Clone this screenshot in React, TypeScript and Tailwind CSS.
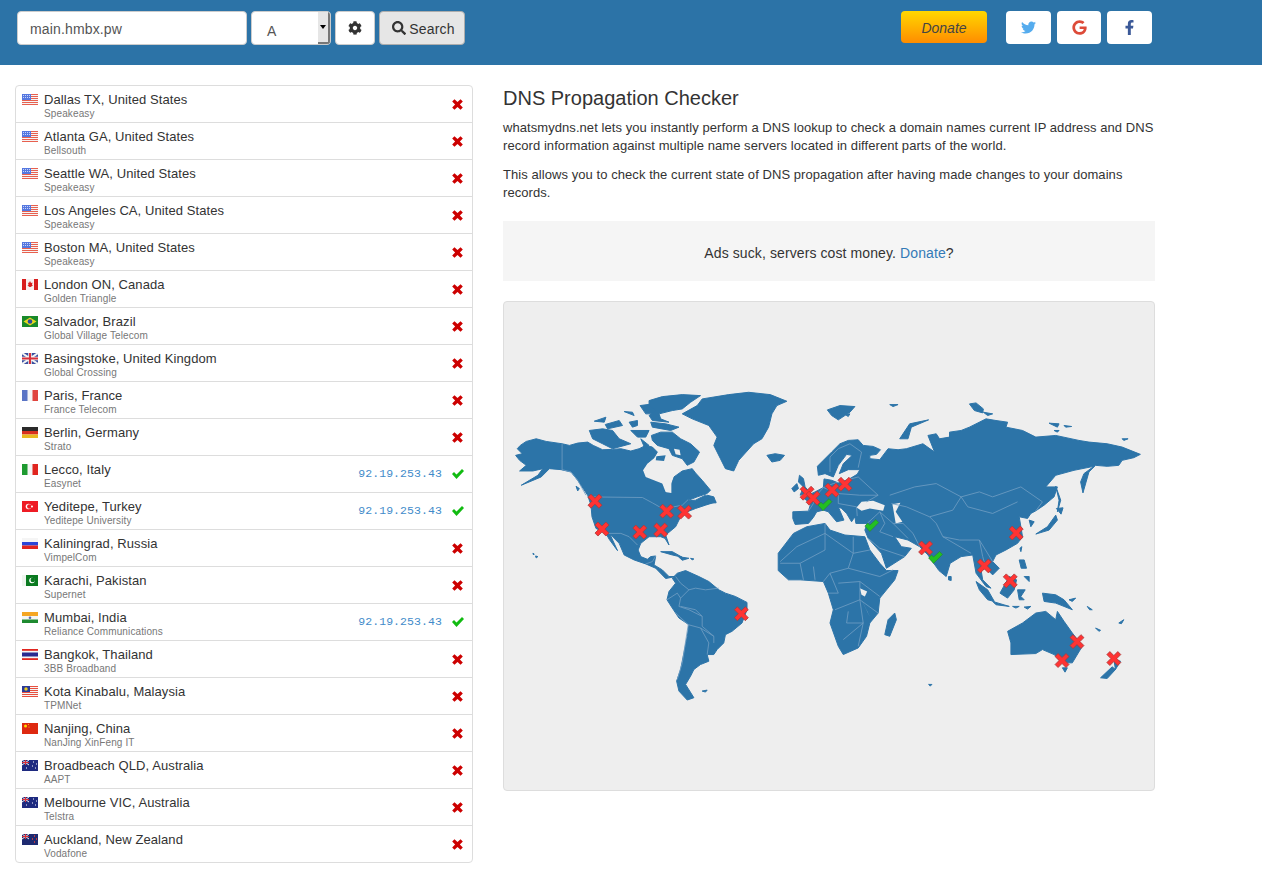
import { FaCog, FaFacebookF, FaGoogle, FaSearch, FaTwitter } from "react-icons/fa";

type Row = { city: string; isp: string; flag: string; ip?: string };

const rows: Row[] = [
  { city: "Dallas TX, United States", isp: "Speakeasy", flag: "us" },
  { city: "Atlanta GA, United States", isp: "Bellsouth", flag: "us" },
  { city: "Seattle WA, United States", isp: "Speakeasy", flag: "us" },
  { city: "Los Angeles CA, United States", isp: "Speakeasy", flag: "us" },
  { city: "Boston MA, United States", isp: "Speakeasy", flag: "us" },
  { city: "London ON, Canada", isp: "Golden Triangle", flag: "ca" },
  { city: "Salvador, Brazil", isp: "Global Village Telecom", flag: "br" },
  { city: "Basingstoke, United Kingdom", isp: "Global Crossing", flag: "gb" },
  { city: "Paris, France", isp: "France Telecom", flag: "fr" },
  { city: "Berlin, Germany", isp: "Strato", flag: "de" },
  { city: "Lecco, Italy", isp: "Easynet", flag: "it", ip: "92.19.253.43" },
  { city: "Yeditepe, Turkey", isp: "Yeditepe University", flag: "tr", ip: "92.19.253.43" },
  { city: "Kaliningrad, Russia", isp: "VimpelCom", flag: "ru" },
  { city: "Karachi, Pakistan", isp: "Supernet", flag: "pk" },
  { city: "Mumbai, India", isp: "Reliance Communications", flag: "in", ip: "92.19.253.43" },
  { city: "Bangkok, Thailand", isp: "3BB Broadband", flag: "th" },
  { city: "Kota Kinabalu, Malaysia", isp: "TPMNet", flag: "my" },
  { city: "Nanjing, China", isp: "NanJing XinFeng IT", flag: "cn" },
  { city: "Broadbeach QLD, Australia", isp: "AAPT", flag: "au" },
  { city: "Melbourne VIC, Australia", isp: "Telstra", flag: "au" },
  { city: "Auckland, New Zealand", isp: "Vodafone", flag: "nz" },
];

function Flag({ code }: { code: string }) {
  const inner: Record<string, React.ReactNode> = {
    us: (
      <>
        <rect width="16" height="11" fill="#f5f5f5" />
        <path d="M0 .5h16M0 2.500h16M0 4.500h16M0 6.500h16M0 8.500h16M0 10.500h16" stroke="#e8604f" />
        <rect width="9" height="6" fill="#5578e0" />
        <path d="M1 1.500h7M1 3.500h7" stroke="#c8d4f8" strokeDasharray="1 1" />
      </>
    ),
    ca: (
      <>
        <rect width="16" height="11" fill="#f8f0f0" />
        <rect width="4" height="11" fill="#d81e1e" />
        <rect x="12" width="4" height="11" fill="#d81e1e" />
        <path d="M8 2l1 2 1.500-.5-.5 2.500 1 .5-2.500 1.500h-1L5.500 6.500l1-.5-.5-2.500L7 4z" fill="#d81e1e" />
      </>
    ),
    br: (
      <>
        <rect width="16" height="11" fill="#1a8a2a" />
        <path d="M8 1.500L14.500 5.500 8 9.500 1.500 5.500z" fill="#e8d820" />
        <circle cx="8" cy="5.500" r="2.300" fill="#2b4a9a" />
      </>
    ),
    gb: (
      <>
        <rect width="16" height="11" fill="#3a4fa0" />
        <path d="M0 0l16 11M16 0L0 11" stroke="#f3f3f3" strokeWidth="2" />
        <path d="M8 0v11M0 5.500h16" stroke="#f3f3f3" strokeWidth="3.500" />
        <path d="M8 0v11M0 5.500h16" stroke="#d8303a" strokeWidth="2" />
      </>
    ),
    fr: (
      <>
        <rect width="16" height="11" fill="#f5f5f5" />
        <rect width="5.500" height="11" fill="#5a74c5" />
        <rect x="10.500" width="5.500" height="11" fill="#e0453f" />
      </>
    ),
    de: (
      <>
        <rect width="16" height="4" fill="#2a2a2a" />
        <rect y="4" width="16" height="3.500" fill="#d83020" />
        <rect y="7.500" width="16" height="3.500" fill="#e8b820" />
      </>
    ),
    it: (
      <>
        <rect width="16" height="11" fill="#f5f5f5" />
        <rect width="5.500" height="11" fill="#1e9a30" />
        <rect x="10.500" width="5.500" height="11" fill="#e0251f" />
      </>
    ),
    tr: (
      <>
        <rect width="16" height="11" fill="#ee1c25" />
        <circle cx="6.500" cy="5.500" r="2.800" fill="#fff" />
        <circle cx="7.300" cy="5.500" r="2.200" fill="#ee1c25" />
        <circle cx="10" cy="5.500" r="1" fill="#fff" />
      </>
    ),
    ru: (
      <>
        <rect width="16" height="4" fill="#f5f5f5" />
        <rect y="4" width="16" height="3.500" fill="#2a46d8" />
        <rect y="7.500" width="16" height="3.500" fill="#e0251f" />
      </>
    ),
    pk: (
      <>
        <rect width="16" height="11" fill="#0a7a20" />
        <rect width="4" height="11" fill="#eef5ee" />
        <circle cx="10" cy="5.500" r="2.800" fill="#fff" />
        <circle cx="10.800" cy="5" r="2.300" fill="#0a7a20" />
      </>
    ),
    in: (
      <>
        <rect width="16" height="4" fill="#f5a623" />
        <rect y="4" width="16" height="3.500" fill="#f5f5f5" />
        <rect y="7.500" width="16" height="3.500" fill="#1e8a30" />
        <circle cx="8" cy="5.700" r="1.300" fill="#5a6aa8" />
      </>
    ),
    th: (
      <>
        <rect width="16" height="11" fill="#f5f5f5" />
        <rect width="16" height="1.800" fill="#e0251f" />
        <rect y="9.200" width="16" height="1.800" fill="#e0251f" />
        <rect y="3.500" width="16" height="4" fill="#2a2a90" />
      </>
    ),
    my: (
      <>
        <rect width="16" height="11" fill="#f5f5f5" />
        <path d="M0 .5h16M0 2.500h16M0 4.500h16M0 6.500h16M0 8.500h16M0 10.500h16" stroke="#e8503f" />
        <rect width="8" height="6" fill="#2a3a98" />
        <circle cx="4" cy="3" r="1.700" fill="#f0d020" />
      </>
    ),
    cn: (
      <>
        <rect width="16" height="11" fill="#de2910" />
        <circle cx="3.500" cy="3" r="1.500" fill="#ffde00" />
        <circle cx="6.500" cy="1.500" r=".5" fill="#ffde00" />
        <circle cx="7" cy="4" r=".5" fill="#ffde00" />
      </>
    ),
    au: (
      <>
        <rect width="16" height="11" fill="#1e2a80" />
        <path d="M0 0l7 5M7 0L0 5" stroke="#f3f3f3" />
        <path d="M3.500 0v5M0 2.500h7" stroke="#d8303a" strokeWidth="1.200" />
        <path d="M11 2h1M14 4h1M10 6h1M13 8h1M4 8h1" stroke="#fff" strokeWidth="1.200" />
      </>
    ),
    nz: (
      <>
        <rect width="16" height="11" fill="#1e2a70" />
        <path d="M0 0l7 5M7 0L0 5" stroke="#f3f3f3" />
        <path d="M3.500 0v5M0 2.500h7" stroke="#d8303a" strokeWidth="1.200" />
        <path d="M12 2h1M14 5h1M10 5h1M12 8h1" stroke="#e8403a" strokeWidth="1.400" />
      </>
    ),
  };
  return (
    <svg width="16" height="11" viewBox="0 0 16 11" className="shrink-0">
      {inner[code]}
    </svg>
  );
}

function CrossMark() {
  return (
    <svg width="11" height="11" viewBox="-6 -6 12 12" className="mr-[1px] mt-[1px]">
      <path
        d="M-3.300 -5.800L0 -2.600 3.300 -5.800 5.800 -3.300 2.600 0 5.800 3.300 3.300 5.800 0 2.600 -3.300 5.800 -5.800 3.300 -2.600 0 -5.800 -3.300z"
        fill="#cc0000"
      />
    </svg>
  );
}

function CheckMark() {
  return (
    <svg width="12" height="10" viewBox="0 0 12 10" className="mt-[1px]">
      <path d="M0 5L2 3 4.500 5.500 10 0 12 2 4.500 10z" fill="#11bb11" />
    </svg>
  );
}

function ResultRow({ row, last }: { row: Row; last: boolean }) {
  return (
    <div className={`flex items-start pl-[6px] pr-[8px] pt-[5px] ${last ? "h-[36px]" : "h-[37px] border-b border-[#ddd]"}`}>
      <div className="mt-[3px]">
        <Flag code={row.flag} />
      </div>
      <div className="ml-[6px] flex-1">
        <div className="text-[13px] leading-[17px] tracking-[.08px] text-[#333]">{row.city}</div>
        <div className="text-[10px] leading-[11px] tracking-[.12px] text-[#777]">{row.isp}</div>
      </div>
      {row.ip && (
        <div className="mr-[8px] mt-[4px] font-['Liberation_Mono',monospace] text-[11.5px] leading-[17px] tracking-[.08px] text-[#428bca]">
          {row.ip}
        </div>
      )}
      <div className="mt-[7px] flex w-[14px] justify-end">
        {row.ip ? <CheckMark /> : <CrossMark />}
      </div>
    </div>
  );
}

const WEST = "translate(505 380) scale(.33333)";
const EAST = "translate(780 380) scale(.33333)";

const westLand = [
  "28,225 48,220 33,205 42,195 60,183 90,175 120,183 168,190 190,195 215,188 245,185 262,195 290,208 320,207 345,205 375,212 400,205 420,195 440,200 455,215 445,232 425,250 412,270 420,290 445,300 470,310 480,335 497,338 497,310 505,290 530,272 560,265 570,278 590,300 615,330 605,340 575,350 545,362 570,360 600,345 632,365 600,375 570,385 545,395 525,410 510,440 480,465 490,495 478,475 465,470 430,470 405,490 397,510 405,530 425,538 435,530 450,528 445,555 470,570 490,590 510,590 480,596 450,565 420,552 385,540 355,525 340,490 312,462 335,512 310,478 300,460 270,445 258,410 255,375 245,345 215,300 195,275 165,268 130,265 105,290 45,315 95,285 110,265 80,272 40,272 60,255 40,240",
  "530,100 575,75 590,55 670,42 730,35 795,42 845,62 815,75 800,100 790,140 770,175 745,190 700,240 685,272 660,265 645,235 625,195 635,170 610,135 560,115",
  "437,165 465,155 500,155 525,175 555,190 582,215 565,245 545,255 530,235 500,225 490,205 455,195 440,180",
  "250,150 290,145 320,150 340,175 375,190 320,205 290,190 260,175",
  "265,122 300,110 295,125",
  "298,132 340,120 350,135 305,145",
  "355,93 380,95 385,105",
  "370,125 395,120 395,135 380,140",
  "403,75 440,70 455,85 450,100 420,100",
  "430,60 470,48 530,42 585,45 555,65 530,85 500,90 460,100 465,115 490,125 440,120 430,105 450,90 430,75",
  "375,150 430,150 420,170 395,170",
  "435,125 480,130 520,140 495,150 440,140",
  "405,175 430,195 415,198",
  "605,345 625,350 632,368 610,368",
  "465,515 500,515 530,532 500,525",
  "518,530 550,535 530,541",
  "555,535 565,537 560,540",
  "210,318 220,325 215,332",
  "500,595 515,580 540,572 580,590 610,605 640,630 660,640 690,650 725,668 725,690 710,730 680,755 660,765 655,790 635,810 625,825 605,825 610,845 585,855 565,870 555,890 540,915 565,955 545,962 520,935 513,905 525,870 535,820 545,770 550,735 520,715 500,685 484,660 490,635 510,610",
  "785,225 810,220 838,225 825,240 800,245",
  "80,520 84,522 82,525",
  "88,528 95,530 90,534",
  "590,935 605,932 600,938",
];

const westBorders = [
  "168,190 168,268 195,275 215,300 240,345",
  "245,350 410,352 440,368 470,385 505,380 530,375 548,358",
  "305,460 345,460 370,470 395,495",
  "420,552 440,545 450,528",
  "510,590 525,610 550,630 570,625 600,630 640,625",
  "550,630 525,655 520,680 550,690 590,710 590,740 625,770 625,790",
  "484,660 515,640 525,655",
  "510,700 548,735 585,745 625,770",
  "590,710 570,690 525,680",
  "548,735 530,850 515,900",
  "585,745 610,790 605,825",
];

const eastLand = [
  "38,395 85,393 92,370 68,352 105,335 130,322 132,296 155,300 175,308 205,298 232,282 240,268 205,268 178,280 190,250 217,225 200,222 175,255 160,290 135,280 115,285 112,258 130,240 155,215 180,190 205,180 235,178 250,195 280,198 302,208 290,222 270,225 270,235 300,238 325,205 355,208 380,205 430,190 465,215 445,165 470,160 480,175 510,170 510,155 545,150 570,140 620,115 650,120 685,125 680,140 730,150 770,170 830,165 900,180 930,185 985,190 1030,200 1085,222 1065,232 1030,240 1020,255 985,258 950,255 930,275 912,338 905,305 915,280 945,258 885,270 830,285 800,320 835,320 825,350 795,375 770,392 755,400 745,415 720,410 725,440 730,470 715,490 680,510 650,525 640,545 660,565 640,585 620,565 605,570 610,600 635,625 620,620 590,580 580,525 545,530 512,550 500,590 478,572 445,525 420,500 385,480 345,470 365,500 395,505 375,530 320,565 305,520 265,475 255,450 262,430 228,430 225,410 215,425 200,400 185,385 175,380 192,420 170,425 145,395 130,390 110,395 100,412 85,430 45,433 38,415",
  "-6,520 40,460 80,440 135,430 150,450 195,465 255,470 270,510 300,550 320,572 355,572 345,600 300,655 295,700 270,730 260,770 235,805 190,825 175,800 150,730 160,690 145,640 130,605 60,600 25,600 -6,572",
  "58,285 70,295 75,320 88,335 60,345 70,320 55,305",
  "35,325 50,310 55,325 42,335",
  "142,88 180,75 225,78 210,95 175,118 155,105",
  "196,102 210,100 205,108",
  "360,175 390,130 447,118 395,140 385,175",
  "570,70 590,67 612,85 610,97 585,90",
  "612,95 640,100 625,105",
  "330,72 355,72 340,78",
  "810,128 840,130 835,140",
  "825,150 840,150 835,155",
  "855,135 878,138 860,140",
  "1030,175 1048,175 1035,180",
  "830,318 840,360 835,395 845,360",
  "832,385 852,383 846,402",
  "770,462 805,440 830,405 835,420 810,450",
  "750,420 765,425 755,440",
  "722,505 728,500 725,515",
  "720,540 735,540 742,565 726,565",
  "735,590 750,590 750,605",
  "662,640 690,590 712,600 705,630 685,655",
  "590,605 625,630 645,665 625,660 600,630",
  "640,665 690,680 650,675",
  "715,630 738,630 725,650 735,660 720,660",
  "790,640 830,645 855,660 880,690 830,670 795,665",
  "685,755 730,730 770,700 800,695 830,720 835,695 855,725 880,760 910,800 880,850 850,850 825,825 790,810 770,822 695,825 695,790",
  "850,865 865,865 858,878",
  "1005,840 1025,845 1010,870",
  "965,895 1000,862 1010,870 985,897",
  "345,700 350,720 330,770 315,765 325,720",
  "507,590 515,590 515,602 507,600",
  "447,915 457,915 452,920",
  "950,745 965,752 960,755",
  "1020,730 1035,720 1028,732",
  "870,660 890,655 880,665",
  "925,680 940,690 932,690",
  "700,680 720,680 710,685",
  "735,682 755,680 745,688",
];

const eastLakes = [
  "230,382 245,365 280,362 315,375 310,392 270,385 245,392",
  "338,372 362,368 348,395 368,425 348,430 342,395",
  "240,625 262,635 255,650 245,645",
  "240,650 272,715 260,690",
];

const eastBorders = [
  "150,230 175,205 210,190 245,215 235,262",
  "150,230 150,275",
  "85,393 100,370 110,345 130,322 175,340 175,370",
  "130,322 160,310 205,298 235,290 295,345 260,365",
  "175,340 240,345 295,345",
  "175,370 230,380 232,408",
  "330,345 405,320 470,310 545,350 600,335 640,350 725,320 790,365 770,392",
  "545,350 565,380 640,400 715,365",
  "545,350 520,390 450,410 380,380 335,370",
  "262,430 300,395 340,430 385,475",
  "300,395 315,430 300,455 340,470",
  "340,430 370,430 400,460 420,500",
  "450,410 470,430 490,470 575,520",
  "490,470 540,480 600,480 640,545",
  "600,480 610,530 620,565",
  "265,475 300,505 375,530",
  "0,545 50,500 135,460 220,520 270,510",
  "135,430 135,510 60,550 0,550",
  "220,470 220,520 205,565 150,580 130,605",
  "205,565 300,590 340,570",
  "60,550 70,600",
  "100,560 105,600",
  "150,580 175,640 145,640",
  "175,610 240,605 300,650",
  "240,605 240,660 295,700",
  "165,690 240,660 250,730",
  "205,695 200,730 250,730 190,780",
  "250,730 235,800",
];

const crosses = [
  [594, 501], [601, 529], [639, 532], [660, 530], [666, 511], [684, 512], [741, 614],
  [807, 493], [813, 498], [832, 490], [845, 484], [926, 548], [985, 566], [1011, 581],
  [1017, 533], [1078, 642], [1063, 661], [1115, 659],
];
const checks = [[825, 505], [872, 526], [936, 558]];

function WorldMap() {
  return (
    <svg viewBox="503 301 652 490" className="block h-full w-full">
      <g transform={WEST}>
        {westLand.map((p) => (
          <polygon key={p} points={p} fill="#2c74a8" stroke="#2c74a8" strokeWidth="3" strokeLinejoin="round" />
        ))}
        <polygon points="412,270 425,250 445,235 470,228 485,240 500,250 515,262 505,285 497,310 497,338 480,335 470,310 445,300 420,290" fill="#eeeeee" />
        <polygon points="452,228 480,225 475,242 450,240" fill="#2c74a8" />
        <polygon points="505,205 522,208 525,225 510,222" fill="#eeeeee" />
        {westBorders.map((p) => (
          <polyline key={p} points={p} fill="none" stroke="#6f9dc2" strokeWidth="2.500" />
        ))}
      </g>
      <g transform={EAST}>
        {eastLand.map((p) => (
          <polygon key={p} points={p} fill="#2c74a8" stroke="#2c74a8" strokeWidth="3" strokeLinejoin="round" />
        ))}
        {eastLakes.map((p) => (
          <polygon key={p} points={p} fill="#eeeeee" />
        ))}
        {eastBorders.map((p) => (
          <polyline key={p} points={p} fill="none" stroke="#6f9dc2" strokeWidth="2.500" />
        ))}
      </g>
      {crosses.map(([x, y]) => (
        <path
          key={`${x}-${y}`}
          transform={`translate(${x} ${y})`}
          d="M-4 -7L0 -3 4 -7 7 -4 3 0 7 4 4 7 0 3 -4 7 -7 4 -3 0 -7 -4z"
          fill="#ff3333"
          stroke="#a83a3a"
          strokeWidth=".8"
        />
      ))}
      {checks.map(([x, y]) => (
        <path
          key={`${x}-${y}`}
          transform={`translate(${x} ${y})`}
          d="M-7 0L-4 -3 -2 -1 4 -6.500 7 -3.500 -2 5.500z"
          fill="#22c022"
          stroke="#2a7a3a"
          strokeWidth=".6"
        />
      ))}
    </svg>
  );
}

export default function App() {
  return (
    <div className="h-[882px] w-[1262px] overflow-hidden bg-white font-['Liberation_Sans',Arial,sans-serif] text-[14px] text-[#333]">
      <div className="flex h-[65px] bg-[#2c73a7] pl-[17px] pt-[11px]">
        <div className="flex h-[34px] w-[230px] items-center rounded-[4px] border border-[#ccc] bg-white pl-[12px] pt-[2px] text-[14px] tracking-[.15px] text-[#555]">
          main.hmbx.pw
        </div>
        <div className="ml-[4px] flex h-[34px] w-[80px] overflow-hidden rounded-[4px] border border-[#ccc] bg-white">
          <div className="flex-1 pl-[15px] pt-[9px] text-[14px] leading-[20px] text-[#555]">A</div>
          <div className="flex w-[12px] items-center justify-center border-r-2 border-b-2 border-[#777] bg-[#e6e6e6]">
            <div className="h-0 w-0 border-x-[3px] border-t-[4px] border-x-transparent border-t-black" />
          </div>
        </div>
        <div className="ml-[4px] flex h-[34px] w-[40px] items-center justify-center rounded-[4px] border border-[#ccc] bg-white text-[#333]">
          <FaCog className="text-[14px]" />
        </div>
        <div className="ml-[4px] flex h-[34px] w-[86px] items-center justify-center gap-[3px] rounded-[4px] border border-[#adadad] bg-[#e6e6e6] pl-[3px] pt-[2px] text-[#333]">
          <FaSearch className="-mt-[2px] text-[14px]" />
          <span className="tracking-[.15px]">Search</span>
        </div>
        <div className="ml-[436px] flex h-[32px] w-[86px] items-center justify-center rounded-[4px] bg-gradient-to-b from-[#ffd700] to-[#ff8c00] pt-[2px] italic text-[#444]">
          Donate
        </div>
        <div className="ml-[19px] flex h-[33px] w-[45px] items-center justify-center rounded-[4px] bg-white">
          <FaTwitter className="text-[15px] text-[#55acee]" />
        </div>
        <div className="ml-[6px] flex h-[33px] w-[44px] items-center justify-center rounded-[4px] bg-white">
          <FaGoogle className="text-[15px] text-[#dd4b39]" />
        </div>
        <div className="ml-[6px] flex h-[33px] w-[45px] items-center justify-center rounded-[4px] bg-white">
          <FaFacebookF className="text-[15px] text-[#3b5998]" />
        </div>
      </div>

      <div className="flex pl-[15px] pt-[20px]">
        <div className="w-[458px] rounded-[4px] border border-[#ddd]">
          {rows.map((r, i) => (
            <ResultRow key={r.city} row={r} last={i === rows.length - 1} />
          ))}
        </div>

        <div className="ml-[30px] w-[652px]">
          <h1 className="mt-[1px] text-[20px] leading-[24px] font-normal text-[#333]">DNS Propagation Checker</h1>
          <p className="mt-[9px] text-[13px] leading-[18px] tracking-[.065px]">
            whatsmydns.net lets you instantly perform a DNS lookup to check a domain names current IP address and DNS record information against multiple name servers located in different parts of the world.
          </p>
          <p className="mt-[11px] text-[13px] leading-[18px] tracking-[.065px]">
            This allows you to check the current state of DNS propagation after having made changes to your domains records.
          </p>
          <div className="mt-[19px] flex h-[60px] items-center justify-center bg-[#f5f5f5] pt-[4px] text-[14px] tracking-[.1px]">
            <span>
              Ads suck, servers cost money. <span className="text-[#337ab7]">Donate</span>?
            </span>
          </div>
          <div className="mt-[20px] h-[490px] overflow-hidden rounded-[4px] border border-[#ddd] bg-[#eeeeee]">
            <WorldMap />
          </div>
        </div>
      </div>
    </div>
  );
}
